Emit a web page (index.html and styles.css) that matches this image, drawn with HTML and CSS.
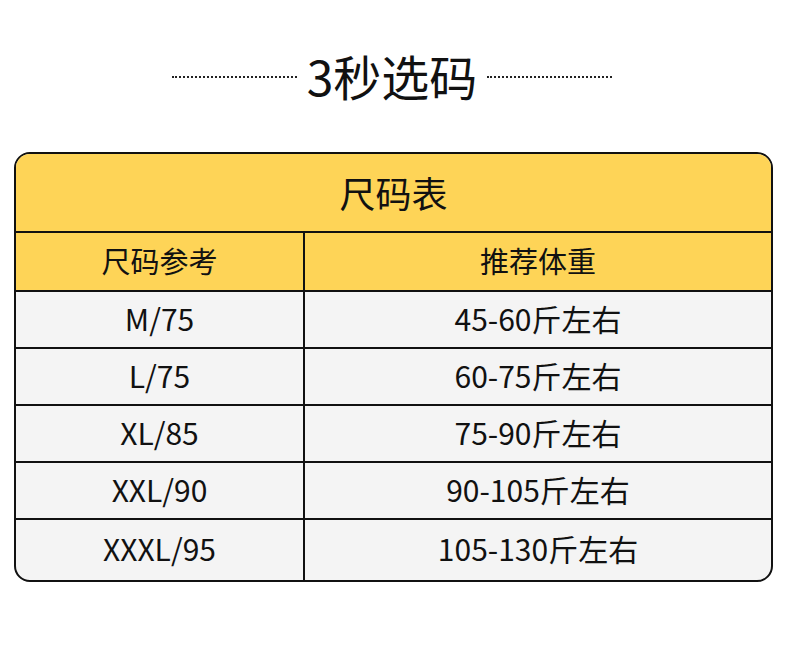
FILE: index.html
```html
<!DOCTYPE html>
<html lang="zh">
<head>
<meta charset="utf-8">
<title>3秒选码</title>
<link rel="stylesheet" href="styles.css">
</head>
<body>
<header class="heading">
  <span class="dots"></span>
  <h1 class="heading-title">3秒选码</h1>
  <span class="dots"></span>
</header>
<section class="size-table">
  <div class="cell cell-title">尺码表</div>
  <div class="cell cell-head cell-left">尺码参考</div>
  <div class="cell cell-head">推荐体重</div>
  <div class="cell cell-left">M/75</div>
  <div class="cell">45-60斤左右</div>
  <div class="cell cell-left">L/75</div>
  <div class="cell">60-75斤左右</div>
  <div class="cell cell-left">XL/85</div>
  <div class="cell">75-90斤左右</div>
  <div class="cell cell-left">XXL/90</div>
  <div class="cell">90-105斤左右</div>
  <div class="cell cell-left cell-last">XXXL/95</div>
  <div class="cell cell-last">105-130斤左右</div>
</section>
</body>
</html>
```
FILE: styles.css
```css
* { box-sizing: border-box; }
html, body {
  margin: 0;
  padding: 0;
  background: #ffffff;
  font-family: "Noto Sans CJK SC", "Noto Sans", sans-serif;
  color: #111111;
}
body { width: 790px; height: 652px; overflow: hidden; }

.heading {
  height: 152px;
  padding-top: 51px;
  padding-right: 6px;
  display: flex;
  justify-content: center;
  align-items: flex-start;
  gap: 10px;
}
.heading-title {
  margin: 0;
  font-size: 48px;
  font-weight: 400;
  line-height: 48px;
  height: 48px;
}
.dots {
  width: 125px;
  margin-top: 25px;
  border-top: 2px dotted #222;
}

.size-table {
  margin-left: 14px;
  width: 759px;
  border: 2px solid #111;
  border-radius: 16px;
  overflow: hidden;
  display: grid;
  grid-template-columns: 289px 1fr;
  grid-template-rows: 79px 59px 57px 57px 57px 57px 60px;
  background: #f4f4f4;
}
.cell {
  display: flex;
  align-items: center;
  justify-content: center;
  font-size: 30px;
  line-height: 1;
  padding-bottom: 4px;
  border-bottom: 2px solid #111;
}
.cell-left { border-right: 2px solid #111; }
.cell-last { border-bottom: none; }
.cell-title {
  grid-column: 1 / 3;
  background: #fed457;
  font-size: 36px;
  padding-bottom: 2px;
}
.cell-head {
  background: #fed457;
  font-size: 29px;
  padding-bottom: 2px;
}
```
